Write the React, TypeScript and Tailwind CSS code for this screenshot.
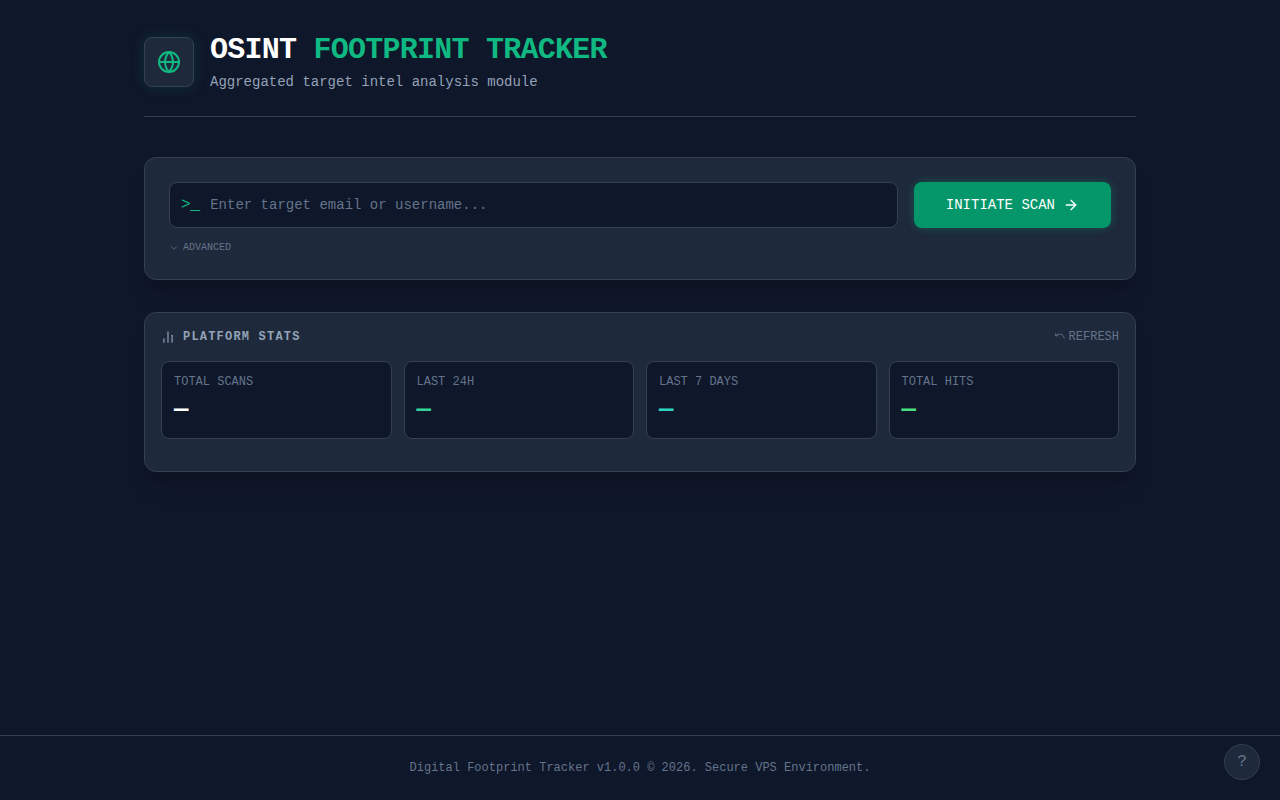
import { useState } from 'react';
import { ArrowRight, ChartNoAxesColumn, ChevronDown } from 'lucide-react';

const stats = [
  { label: 'TOTAL SCANS', color: 'text-white' },
  { label: 'LAST 24H', color: 'text-[#34d399]' },
  { label: 'LAST 7 DAYS', color: 'text-[#2dd4bf]' },
  { label: 'TOTAL HITS', color: 'text-[#4ade80]' },
];

const Header = () => (
  <header className="flex items-center gap-4 border-b border-[#334155] pb-6">
    <div className="rounded-lg border border-[#334155] bg-[#1e293b] p-3 text-[#10b981] shadow-[0_0_15px_rgba(16,185,129,0.15)]">
      <svg className="h-6 w-6" viewBox="0 0 24 24" fill="none" stroke="currentColor" strokeWidth="2" strokeLinecap="round" strokeLinejoin="round">
        <circle cx="12" cy="12" r="10" />
        <path d="M2 12h20" />
        <path d="M12 2a15.3 15.3 0 0 1 4 10 15.3 15.3 0 0 1-4 10 15.3 15.3 0 0 1-4-10 15.3 15.3 0 0 1 4-10z" />
      </svg>
    </div>
    <div>
      <h1 className="text-3xl font-bold tracking-tight text-white">
        OSINT <span className="text-[#10b981]">FOOTPRINT TRACKER</span>
      </h1>
      <p className="mt-1 text-sm text-[#94a3b8]">Aggregated target intel analysis module</p>
    </div>
  </header>
);

const ScanForm = () => {
  const [target, setTarget] = useState('');

  return (
    <section className="rounded-xl border border-[#334155] bg-[#1e293b] p-6 shadow-xl">
      <form className="flex gap-4" onSubmit={(e) => e.preventDefault()}>
        <label className="flex flex-1 items-center gap-[10px] rounded-lg border border-[#334155] bg-[#0f172a] px-[11px]">
          <span className="text-[#10b981]">&gt;_</span>
          <input
            type="text"
            aria-label="Target email or username"
            placeholder="Enter target email or username..."
            value={target}
            onChange={(e) => setTarget(e.target.value)}
            className="w-full bg-transparent py-3 text-sm text-white outline-none placeholder:text-[#64748b]"
          />
        </label>
        <button
          type="submit"
          className="flex items-center gap-2 rounded-lg bg-[#059669] px-8 py-3 text-sm text-white shadow-[0_0_10px_rgba(16,185,129,0.3)]"
        >
          INITIATE SCAN
          <ArrowRight size={16} />
        </button>
      </form>
      <button type="button" className="mt-3 flex items-center gap-1 text-[10px] leading-[15px] text-[#64748b]">
        <ChevronDown size={10} />
        ADVANCED
      </button>
    </section>
  );
};

const PlatformStats = () => (
  <section className="rounded-xl border border-[#334155] bg-[#1e293b] px-4 pt-4 pb-8 shadow-xl">
    <div className="mb-4 flex items-center justify-between">
      <h2 className="flex items-center gap-2 text-xs font-bold tracking-widest text-[#94a3b8]">
        <ChartNoAxesColumn size={14} />
        PLATFORM STATS
      </h2>
      <button type="button" className="flex items-center gap-1 text-xs text-[#64748b]">
        <svg className="h-[10px] w-[10px]" viewBox="0 0 24 24" fill="none" stroke="currentColor" strokeWidth="2" strokeLinecap="round" strokeLinejoin="round">
          <path d="M1 4v5h6" />
          <path d="M2 8c6-5 19-5 20 7" />
        </svg>
        REFRESH
      </button>
    </div>
    <div className="grid grid-cols-2 gap-3 md:grid-cols-4">
      {stats.map((stat) => (
        <div key={stat.label} className="rounded-lg border border-[#334155] bg-[#0f172a] p-3">
          <p className="text-xs text-[#64748b]">{stat.label}</p>
          <p className={`mt-1 text-2xl font-bold ${stat.color}`}>—</p>
        </div>
      ))}
    </div>
  </section>
);

export default function App() {
  return (
    <div className="flex min-h-screen flex-col bg-[#0f172a] font-['Liberation_Mono',monospace]">
      <main className="mx-auto w-full max-w-5xl flex-1 px-4 pt-8">
        <Header />
        <div className="mt-10 flex flex-col gap-8">
          <ScanForm />
          <PlatformStats />
        </div>
      </main>
      <footer className="border-t border-[#334155] py-6 text-center text-xs text-[#64748b]">
        Digital Footprint Tracker v1.0.0 © 2026. Secure VPS Environment.
      </footer>
      <button
        type="button"
        aria-label="Help"
        className="fixed right-5 bottom-5 h-9 w-9 rounded-full border border-[#334155] bg-[#1e293b] text-base text-[#64748b]"
      >
        ?
      </button>
    </div>
  );
}
